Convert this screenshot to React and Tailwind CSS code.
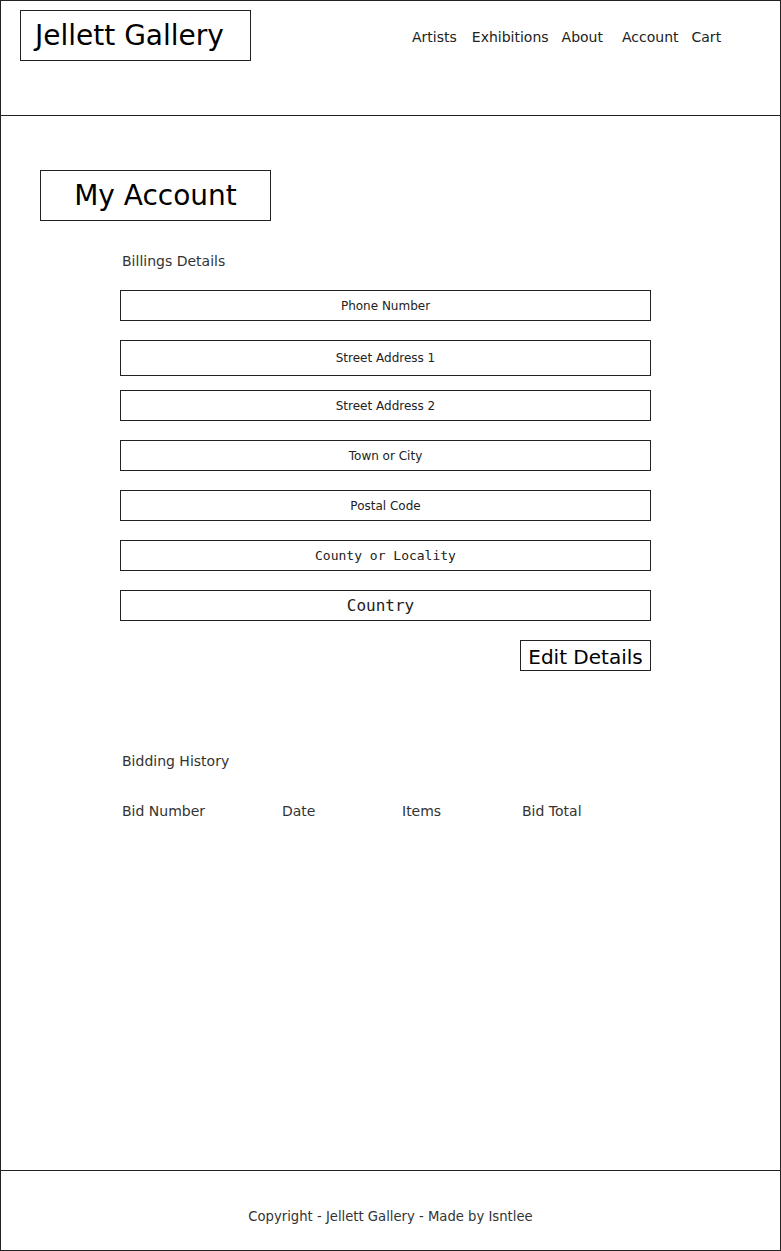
export default function App() {
  const fields = [
    { label: "Phone Number", h: "h-[31px]", mt: "mt-[20px]", cls: "text-[12px]", mono: false },
    { label: "Street Address 1", h: "h-[36px]", mt: "mt-[19px]", cls: "text-[12px]", mono: false },
    { label: "Street Address 2", h: "h-[31px]", mt: "mt-[14px]", cls: "text-[12px]", mono: false },
    { label: "Town or City", h: "h-[31px]", mt: "mt-[19px]", cls: "text-[12px]", mono: false },
    { label: "Postal Code", h: "h-[31px]", mt: "mt-[19px]", cls: "text-[12px]", mono: false },
    { label: "County or Locality", h: "h-[31px]", mt: "mt-[19px]", cls: "text-[13px]", mono: true },
    { label: "Country", h: "h-[31px]", mt: "mt-[19px]", cls: "text-[16px] pr-[10px]", mono: true },
  ];
  return (
    <div className="w-[781px] h-[1251px] bg-white text-[#1a1a1a] font-['DejaVu_Sans',sans-serif] flex flex-col border border-[#222] box-border">
      <header className="h-[115px] shrink-0 border-b border-[#222] flex items-start">
        <div className="ml-[19px] mt-[9px] w-[231px] h-[51px] border border-[#222] flex items-center pl-[14px] text-[28px] text-black">
          Jellett Gallery
        </div>
        <nav className="ml-[161px] mt-[26px] flex text-[14px] text-[#222]">
          <span>Artists</span>
          <span className="ml-[15px]">Exhibitions</span>
          <span className="ml-[13px]">About</span>
          <span className="ml-[19px]">Account</span>
          <span className="ml-[13px]">Cart</span>
        </nav>
      </header>
      <main className="flex-1 flex flex-col">
        <div className="ml-[39px] mt-[54px] w-[231px] h-[51px] border border-[#222] flex items-center justify-center text-[28px] text-black">
          My Account
        </div>
        <div className="ml-[119px] w-[531px] flex flex-col">
          <div className="mt-[31px] pl-[2px] text-[14px] leading-[18px] text-[#333]">Billings Details</div>
          {fields.map((f) => (
            <div
              key={f.label}
              className={`${f.h} ${f.mt} border border-[#222] flex items-center justify-center text-[#222] ${f.cls} ${f.mono ? "font-['DejaVu_Sans_Mono',monospace]" : ""}`}
            >
              {f.label}
            </div>
          ))}
          <div className="mt-[19px] flex justify-end">
            <div className="w-[131px] h-[31px] border border-[#222] flex items-end justify-center text-[20px] leading-[25px] text-black">
              Edit Details
            </div>
          </div>
          <div className="mt-[81px] pl-[2px] text-[14px] leading-[18px] text-[#333]">Bidding History</div>
          <div className="mt-[32px] pl-[2px] flex text-[14px] leading-[18px] text-[#333]">
            <span className="w-[160px]">Bid Number</span>
            <span className="w-[120px]">Date</span>
            <span className="w-[120px]">Items</span>
            <span>Bid Total</span>
          </div>
        </div>
      </main>
      <footer className="h-[80px] shrink-0 border-t border-[#222] flex items-start justify-center">
        <div className="mt-[37px] text-[13.2px] leading-[18px] text-[#333]">Copyright - Jellett Gallery - Made by Isntlee</div>
      </footer>
    </div>
  );
}
